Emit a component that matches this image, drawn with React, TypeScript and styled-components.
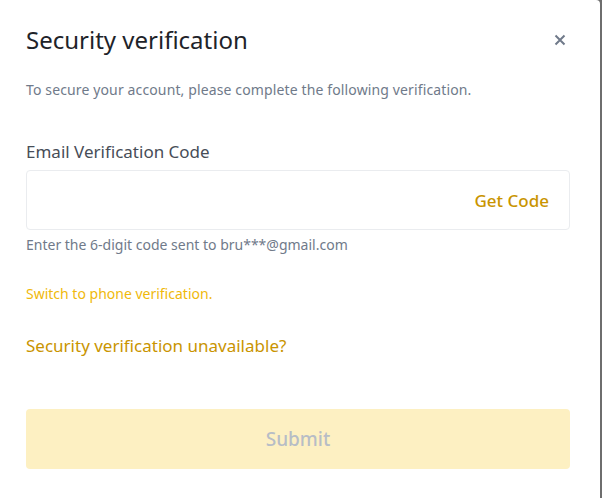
import React from "react";
import styled, { createGlobalStyle } from "styled-components";

const Global = createGlobalStyle`
  html, body { margin: 0; padding: 0; }
  body {
    background: #6e6e6e;
    font-family: "Noto Sans", "Open Sans", Arial, sans-serif;
    width: 602px;
    height: 498px;
    overflow: hidden;
  }
`;

const Dialog = styled.div`
  width: 600px;
  height: 498px;
  background: #ffffff;
  border-top-right-radius: 4px;
  box-sizing: border-box;
  padding: 24px 30px 0 26px;
  display: flex;
  flex-direction: column;
`;

const Header = styled.div`
  display: flex;
  align-items: center;
  justify-content: space-between;
  height: 32px;
  padding-right: 2px;
`;

const Title = styled.h1`
  margin: 0;
  font-size: 24px;
  font-weight: 400;
  color: #1e2329;
  line-height: 32px;
`;

const Close = styled.button`
  border: 0;
  background: none;
  padding: 0;
  width: 16px;
  height: 16px;
  display: flex;
  align-items: center;
  justify-content: center;
  cursor: pointer;
`;

const Subtitle = styled.p`
  margin: 24px 0 0;
  font-size: 14px;
  line-height: 20px;
  letter-spacing: 0.13px;
  color: #707a8a;
`;

const Label = styled.div`
  margin-top: 40px;
  font-size: 17px;
  line-height: 24px;
  color: #474d57;
`;

const InputBox = styled.div`
  margin-top: 6px;
  height: 60px;
  box-sizing: border-box;
  border: 1px solid #eaecef;
  border-radius: 4px;
  display: flex;
  align-items: center;
  padding: 0 20px 0 12px;
`;

const Input = styled.input`
  flex: 1;
  border: 0;
  outline: none;
  font: inherit;
  font-size: 16px;
  background: transparent;
`;

const GetCode = styled.span`
  font-size: 17px;
  font-weight: 500;
  color: #c99400;
`;

const Hint = styled.p`
  margin: 5px 0 0;
  font-size: 14px;
  line-height: 20px;
  color: #707a8a;
`;

const Link = styled.a<{ $size: number; $color: string; $top: number }>`
  display: block;
  margin-top: ${(p) => p.$top}px;
  font-size: ${(p) => p.$size}px;
  line-height: 24px;
  color: ${(p) => p.$color};
  text-decoration: none;
  cursor: pointer;
`;

const Submit = styled.button`
  margin-top: 51px;
  height: 60px;
  border: 0;
  border-radius: 4px;
  background: #fdf0c2;
  color: #b7bdc6;
  font: inherit;
  font-size: 19px;
  font-weight: 500;
`;

export default function App() {
  return (
    <>
      <Global />
      <Dialog>
        <Header>
          <Title>Security verification</Title>
          <Close aria-label="Close">
            <svg width="12" height="12" viewBox="0 0 12 12">
              <path d="M1.5 1.5L10.5 10.5M10.5 1.5L1.5 10.5" stroke="#707a8a" strokeWidth="2" strokeLinecap="butt" />
            </svg>
          </Close>
        </Header>
        <Subtitle>To secure your account, please complete the following verification.</Subtitle>
        <Label>Email Verification Code</Label>
        <InputBox>
          <Input />
          <GetCode>Get Code</GetCode>
        </InputBox>
        <Hint>Enter the 6-digit code sent to bru***@gmail.com</Hint>
        <Link $size={14} $color="#f0b90b" $top={27}>Switch to phone verification.</Link>
        <Link $size={17} $color="#c99400" $top={28}>Security verification unavailable?</Link>
        <Submit disabled>Submit</Submit>
      </Dialog>
    </>
  );
}
